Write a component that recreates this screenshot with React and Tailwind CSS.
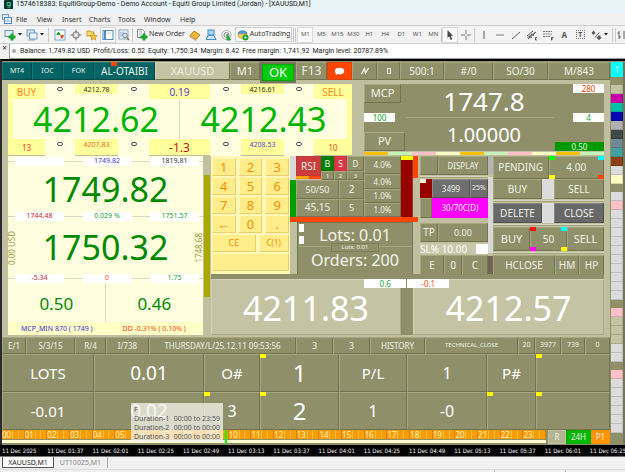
import React from "react";
import { twMerge } from "tailwind-merge";

function Key({ className = "", children, label }) {
  return (
    <button
      type="button"
      aria-label={label}
      className={twMerge(
        "flex min-w-0 items-center justify-center overflow-hidden whitespace-nowrap border border-t-[#a6a780] border-l-[#a6a780] border-r-[#73744f] border-b-[#73744f] bg-[#8f9069] text-[#f0f0e6]",
        className
      )}
    >
      {children}
    </button>
  );
}

function Chip({ className }) {
  return <span className={twMerge("absolute h-1 w-[6px]", className)} />;
}

function Tag({ className, children }) {
  return (
    <span className={twMerge("flex h-[9px] items-center justify-center whitespace-nowrap bg-white text-[8px] leading-none", className)}>
      {children}
    </span>
  );
}

/* ---------- window chrome ---------- */

function TitleBar() {
  return (
    <header className="flex h-[13px] items-start gap-[3px] bg-[#e7f3f7] pl-1 font-['Roboto','Noto_Sans',sans-serif] text-[7px] leading-[9px] text-[#222]">
      <svg viewBox="0 0 9 9" className="h-[9px] w-[9px] shrink-0">
        <rect width="9" height="9" rx="1" fill="#12332f" />
        <path d="M6.4 2.5H3.2v3h3V2.5v4.6H3.4" fill="none" stroke="#27c28b" strokeWidth="1" />
      </svg>
      <span className="whitespace-nowrap">
        1574618383: EquitiGroup-Demo - Demo Account - Equiti Group Limited (Jordan) - [XAUUSD,M1]
      </span>
    </header>
  );
}

function MenuBar() {
  return (
    <nav className="flex h-3 items-center bg-[#f0f0f0] pl-[2px] text-[7px] leading-none text-[#333]">
      <svg viewBox="0 0 10 10" className="mr-1 h-[10px] w-[10px] shrink-0">
        <rect x="0.5" y="0.5" width="6" height="5" fill="#dcebf7" stroke="#6b9cc9" />
        <rect x="2.5" y="3.5" width="7" height="6" fill="#fff" stroke="#4a8ac0" />
        <path d="M4 8V6M6 8V5M8 8V6.5" stroke="#4a8ac0" strokeWidth="0.8" />
      </svg>
      <button type="button" className="w-[21px] text-left">File</button>
      <button type="button" className="w-[25px] text-left">View</button>
      <button type="button" className="w-[27px] text-left">Insert</button>
      <button type="button" className="w-[29px] text-left">Charts</button>
      <button type="button" className="w-[26px] text-left">Tools</button>
      <button type="button" className="w-9 text-left">Window</button>
      <button type="button" className="text-left">Help</button>
    </nav>
  );
}

function Tool({ label, className = "", children }) {
  return (
    <button type="button" aria-label={label} className={twMerge("flex h-4 w-4 shrink-0 items-center justify-center", className)}>
      {children}
    </button>
  );
}

function Icon({ children, className = "" }) {
  return (
    <svg viewBox="0 0 12 12" className={twMerge("h-3 w-3 shrink-0", className)} fill="none" stroke="#5a5a5a" strokeWidth="1">
      {children}
    </svg>
  );
}

function Caret() {
  return (
    <svg viewBox="0 0 4 3" className="h-[3px] w-1 shrink-0">
      <path d="M0 0H4L2 2.5Z" fill="#222" />
    </svg>
  );
}

function Sep({ className = "" }) {
  return <span className={twMerge("h-[14px] w-px shrink-0 bg-[#c8c8c8]", className)} />;
}

const PERIODS = ["M1", "M5", "M15", "M30", "H1", "H4", "D1", "W1", "MN"];

function Toolbar() {
  return (
    <div className="flex h-[19px] items-center overflow-hidden border-y border-[#cfcfcf] bg-[#f3f3f3] pl-1 text-[7px] text-[#333]">
      <Tool label="New chart" className="w-[22px] justify-start gap-[2px]">
        <Icon>
          <rect x="1" y="1.5" width="8" height="6" fill="#e4f0fa" stroke="#6b93b5" />
          <path d="M8 4.5v7M4.5 8h7" stroke="#18a428" strokeWidth="2.8" />
        </Icon>
        <Caret />
      </Tool>
      <Tool label="Profiles" className="w-[22px] justify-start gap-[2px]">
        <Icon>
          <rect x="1" y="1" width="7.5" height="6" fill="#d6e7f6" stroke="#6c9ac4" />
          <rect x="3.5" y="4" width="7.5" height="6" fill="#eef6fc" stroke="#6c9ac4" />
          <path d="M2 11h7" stroke="#7a9cc0" />
        </Icon>
        <Caret />
      </Tool>
      <Sep className="mr-[3px]" />
      <Tool label="Market watch">
        <Icon>
          <rect x="1" y="1" width="10" height="10" fill="#fff" stroke="#79a4cf" />
          <path d="M3 5.5 4.5 3 6 5.5Z" fill="#18a428" stroke="#18a428" />
          <path d="M6.5 6.5H9.5L8 9.5Z" fill="#e2502c" stroke="#e2502c" />
        </Icon>
      </Tool>
      <Tool label="Data window">
        <Icon>
          <circle cx="6" cy="6" r="3.3" stroke="#777" />
          <path d="M6 .5v4M6 7.5v4M.5 6h4M7.5 6h4" stroke="#777" />
        </Icon>
      </Tool>
      <Tool label="Navigator">
        <Icon>
          <path d="M1 2h3l1 1h3v4H1Z" fill="#f5d67a" stroke="#d09c2a" />
          <path d="M7.5 4l1.1 2.4 2.6.3-1.9 1.8.5 2.6-2.3-1.3-2.3 1.3.5-2.6L3.8 6.7l2.6-.3Z" fill="#f7c43c" stroke="#c98f1d" strokeWidth=".7" />
        </Icon>
      </Tool>
      <Tool label="Terminal" className="border border-[#d5d5d5] bg-[#fafafa]">
        <Icon>
          <rect x="1" y="1.5" width="10" height="9" fill="#fff" stroke="#4f8cc4" />
          <path d="M3 2v8" stroke="#4f8cc4" strokeWidth="2" />
          <path d="M5 4h4" stroke="#b8cfe4" />
        </Icon>
      </Tool>
      <Tool label="Strategy tester">
        <Icon>
          <rect x="1" y="1" width="9" height="9" fill="#eef3f8" stroke="#8fa9c2" />
          <path d="M3 3v5M5 2.5v4" stroke="#8fa9c2" />
          <circle cx="7" cy="6.5" r="2.3" fill="#dcebf7" stroke="#71869b" />
          <path d="M8.8 8.5 11 11" stroke="#8b7a45" strokeWidth="1.5" />
        </Icon>
      </Tool>
      <Sep className="mr-[3px]" />
      <button type="button" className="flex shrink-0 items-center gap-px whitespace-nowrap">
        <Icon>
          <path d="M1.5.5h5l2 2v6h-7Z" fill="#fff" stroke="#7d8ea0" />
          <path d="M3 3h3M3 5h3" stroke="#7d8ea0" strokeWidth=".7" />
          <path d="M8 4.5v7M4.5 8h7" stroke="#18a428" strokeWidth="2.8" />
        </Icon>
        New Order
      </button>
      <Tool label="MetaEditor" className="ml-[2px]">
        <Icon>
          <path d="M1 6.5 5 2l6 4-4 4.5Z" fill="#efb83a" stroke="#bc7d1c" />
          <path d="M1 6.5v1.5L7 11.5v-1Z" fill="#fff" stroke="#bc7d1c" strokeWidth=".7" />
        </Icon>
      </Tool>
      <Tool label="Options">
        <Icon>
          <rect x="3" y="1" width="6" height="5" fill="#a8d2f2" stroke="#4c8dc8" />
          <path d="M1 10.5 3 6.5h6l2 4Z" fill="#cfe4f5" stroke="#4c8dc8" />
        </Icon>
      </Tool>
      <Tool label="Signals">
        <Icon>
          <circle cx="5.5" cy="6" r="4.7" stroke="#b5b5b5" />
          <circle cx="5.5" cy="6" r="2.5" stroke="#8a8a8a" />
          <path d="M6 5 9.5 11H6Z" fill="#2aa53a" stroke="#2aa53a" />
        </Icon>
      </Tool>
      <button type="button" className="flex h-[15px] shrink-0 items-center gap-px whitespace-nowrap border border-[#d0d0d0] bg-[#fafafa] px-px">
        <Icon>
          <path d="M1 4.5C2 1 9 1 10 4.5L6 7Z" fill="#4b9fdc" stroke="#2f75b3" />
          <path d="M1 5h9v2.5L5 10 1 7.5Z" fill="#f5cf63" stroke="#c99631" strokeWidth=".7" />
          <circle cx="8.5" cy="8.5" r="3" fill="#19a52b" stroke="none" />
          <path d="M7.7 7v3L10 8.5Z" fill="#fff" stroke="none" />
        </Icon>
        AutoTrading
      </button>
      <Sep className="mx-px" />
      <Sep className="mr-px" />
      <div className="flex w-[144px] shrink-0">
        {PERIODS.map((p, i) => (
          <button
            key={p}
            type="button"
            className={twMerge("h-4 w-4 shrink-0 text-center text-[6px] text-[#555]", i === 0 && "border border-[#d8d8d8] bg-[#fafafa]")}
          >
            {p}
          </button>
        ))}
      </div>
      <Sep />
      <Tool label="Cursor" className="border border-[#d8d8d8] bg-[#fbfbfb]">
        <Icon>
          <path d="M3.5 1v8l1.8-1.7L6.7 11l1.500-.6L6.8 6.8H9Z" fill="#444" stroke="none" />
        </Icon>
      </Tool>
      <Tool label="Crosshair">
        <Icon><path d="M6 1v4M6 7v4M1 6h4M7 6h4" stroke="#777" /></Icon>
      </Tool>
      <Sep />
      <Tool label="Vertical line" className="ml-px">
        <Icon><path d="M6 2v8" /></Icon>
      </Tool>
      <Tool label="Horizontal line">
        <Icon><path d="M2 6h8" stroke="#777" /></Icon>
      </Tool>
      <Tool label="Trendline">
        <Icon><path d="M2 10l8-7" /></Icon>
      </Tool>
      <Tool label="Channel">
        <Icon>
          <path d="M1 7l6-5M2 10l8-7M3 7.5l3 1M5 5l3 1.5M1.5 8.5l8-5" />
          <path d="M11 8.5H9.5v2.5H11" stroke="#333" strokeWidth=".8" />
        </Icon>
      </Tool>
      <Tool label="Fibonacci">
        <Icon>
          <path d="M1 2.5h9M1 5h9M1 7.5h7" strokeDasharray="2 .6" stroke="#777" />
          <path d="M9.5 11.5V8.5h2M9.5 10h1.5" stroke="#333" strokeWidth=".8" />
        </Icon>
      </Tool>
      <Tool label="Text" className="text-[8px] font-bold text-[#555]">A</Tool>
      <Tool label="Text label">
        <span className="flex h-[9px] w-[9px] items-center justify-center border border-dotted border-[#777] text-[7px] font-bold leading-none text-[#555]">T</span>
      </Tool>
      <Tool label="Shapes" className="w-[22px] gap-[2px]">
        <Icon>
          <path d="M3.5 1.5 5.5 4l-2 2-2-2Z" fill="#555" stroke="none" />
          <path d="M5 8.5l4-5M9 6.5l2 2.2-2 2-2-2Z" fill="#555" />
        </Icon>
        <Caret />
      </Tool>
      <Sep className="ml-[2px] mr-[2px]" />
      <Sep />
      <Tool label="Bar chart" className="w-2">
        <Icon><path d="M5 2v8M3.5 4H5M5 8h2M10 2v8" /></Icon>
      </Tool>
    </div>
  );
}

function AccountBar() {
  return (
    <div className="flex h-[15px] bg-[#f0f0f0] text-[7px] text-[#222]">
      <button type="button" aria-label="Close" className="flex w-[9px] shrink-0 justify-center text-[8px] leading-[8px]">×</button>
      <div className="flex flex-1 items-center gap-[4px] whitespace-nowrap border-l border-b border-[#9a9a9a] bg-white pl-[2px] font-['Roboto','Noto_Sans',sans-serif]">
        <span className="h-1 w-1 rounded-full bg-[#aaa]" />
        <span className="flex gap-[3px]">
          <span>Balance: 1,749.82 USD</span>
          <span>Profit/Loss: 0.52</span>
          <span>Equity: 1,750.34</span>
          <span>Margin: 8.42</span>
          <span>Free margin: 1,741.92</span>
          <span>Margin level: 20787.89%</span>
        </span>
      </div>
    </div>
  );
}

/* ---------- trading panel ---------- */

function HeaderRow() {
  const teal = "border-t-[#1b7878] border-l-[#1b7878] border-r-[#004848] border-b-[#004848] bg-[#006464] text-[7px]";
  return (
    <div className="grid h-[18px] grid-cols-[30fr_31fr_31fr_61fr_75fr_30fr_36fr_31fr_25fr_25fr_23fr_44fr_49fr_55fr_62fr]">
      <Key className={teal}>MT4</Key>
      <Key className={teal}>IOC</Key>
      <Key className={teal}>FOK</Key>
      <div className="relative grid">
        <Key className={twMerge(teal, "text-[10px]")}>AL-OTAIBI</Key>
        <Chip className="left-[17px] top-0 bg-[#ff4500]" />
      </div>
      <Key className="border-t-[#d4d3b8] border-l-[#d4d3b8] bg-[#c4c3a4] text-[11px] text-[#efeedd]">XAUUSD</Key>
      <Key className="text-[11px]">M1</Key>
      <div className="relative z-10 -mb-[3px] grid bg-[#74755a] p-[2px]">
        <Key className="border-[#00a800] bg-[#00cc0a] text-[13px] leading-none text-white">OK</Key>
      </div>
      <Key className="text-[12px]">F13</Key>
      <Key label="Messages" className="border-[#e04000] bg-[#ff4500]">
        <svg viewBox="0 0 12 10" className="h-[9px] w-[11px]" fill="#fff">
          <ellipse cx="6" cy="4.5" rx="5.2" ry="3.7" />
          <path d="M2 6v3l3-1.5Z" />
        </svg>
      </Key>
      <Key label="Flash">
        <svg viewBox="0 0 10 8" className="h-2 w-[10px]" fill="none" stroke="#f5f5ea" strokeWidth="1.3">
          <path d="M1.5 7 4.5 1.5 5.5 6 8.5 1" />
        </svg>
      </Key>
      <Key label="Frame"><span className="h-[6px] w-1 border border-[#f5f5ea]" /></Key>
      <Key className="text-[10px]">500:1</Key>
      <Key className="text-[10px]">#/0</Key>
      <Key className="text-[10px]">SO/30</Key>
      <Key className="text-[10px]">M/843</Key>
    </div>
  );
}

function Oval() {
  return <span className="h-1 w-[6px] rounded-[2px] border border-[#555] bg-white" />;
}

function Pale({ className }) {
  return <span className={twMerge("flex justify-center bg-[#ffffe0]", className)}><Oval /></span>;
}

function PriceBlock() {
  const cols = "grid grid-cols-[37fr_30fr_43fr_31fr_61fr_31fr_43fr_30fr_38fr]";
  return (
    <section className="flex h-[71px] flex-col bg-[#ffff9c]">
      <div className={`${cols} h-[15px]`}>
        <span className="flex items-center justify-center text-[10px] leading-none text-[#ff8c1a]">BUY</span>
        <Pale className="pt-[3px]" />
        <span className="bg-[#ffffe0]"><Tag className="h-[10px] bg-[#ffff9c] pt-[2px] text-[7px] text-[#333]">4212.78</Tag></span>
        <Pale className="pt-[3px]" />
        <span className="flex items-center justify-center text-[10px] leading-none text-[#5b3cd6]">0.19</span>
        <Pale className="pt-[3px]" />
        <span className="bg-[#ffffe0]"><Tag className="h-[10px] bg-[#ffff9c] pt-[2px] text-[7px] text-[#333]">4216.61</Tag></span>
        <Pale className="pt-[3px]" />
        <span className="flex items-center justify-center text-[10px] leading-none text-[#ff8c1a]">SELL</span>
      </div>
      <div className="mx-[5px] grid h-10 grid-cols-2 bg-[#ffffe0] text-[34px] leading-10 text-[#00b400]">
        <button type="button" className="border-r border-[#d9d9c8]">4212.62</button>
        <button type="button">4212.43</button>
      </div>
      <div className={`${cols} h-[11px]`}>
        <span className="flex items-center justify-center text-[8px] leading-[18px] text-[#f04a1a]">13</span>
        <Pale className="border-b border-[#d9d9b8] pt-[3px]" />
        <Tag className="mt-[2px] bg-transparent text-[7px] text-[#ff6a1a]">4207.83</Tag>
        <Pale className="border-b border-[#d9d9b8] pt-[3px]" />
        <span className="flex items-center justify-center text-[12px] leading-none text-[#c01818]">-1.3</span>
        <Pale className="border-b border-[#d9d9b8] pt-[3px]" />
        <Tag className="mt-[2px] bg-transparent text-[7px] text-[#5b3cd6]">4208.53</Tag>
        <Pale className="border-b border-[#d9d9b8] pt-[3px]" />
        <span className="flex items-center justify-center text-[8px] leading-[18px] text-[#f04a1a]">10</span>
      </div>
    </section>
  );
}

const STRIP = ["bg-[#ffc000]", "bg-[#c4f2b8]", "bg-[#ffc0c8]", "bg-[#ffffc4]", "bg-[#ffc000]", "bg-[#c4f2b8]", "bg-[#ffc0c8]", "bg-[#ffffc4]", "bg-[#ffc000]", "bg-[#c4f2b8]"];

function McpBlock() {
  return (
    <section>
      <div className="grid h-[67px] grid-cols-[43fr_157fr_40fr] bg-[#8f9069]">
        <div className="flex flex-col justify-between">
          <Key className="h-[19px] w-[37px] text-[11px]">MCP</Key>
          <Tag className="w-[31px] text-[#18a428]">100</Tag>
          <Key className="h-[19px] text-[11px]">PV</Key>
        </div>
        <div className="grid grid-rows-[34px_33px] text-center text-white">
          <span className="border-b border-[#a6a780] pl-2 text-[26px] leading-[34px]">1747.8</span>
          <span className="pl-2 text-[20px] leading-[34px]">1.00000</span>
        </div>
        <div className="flex flex-col items-end justify-between">
          <Tag className="w-[31px] text-[#ff4500]">280</Tag>
          <Tag className="w-[31px] text-[#18a428]">4</Tag>
          <Tag className="w-[49px] bg-[#009a00] text-[#e4ffe4]">0.50</Tag>
        </div>
      </div>
      <div className="mt-px flex h-[3px]">
        {STRIP.map((c, i) => <span key={i} className={`flex-1 ${c}`} />)}
      </div>
    </section>
  );
}

function TagRow({ items }) {
  return (
    <div className="relative flex h-[9px] items-center justify-between pl-[7px] pr-1">
      <span className="absolute inset-x-0 top-1 h-px bg-[#d8d8c4]" />
      {items.map(([text, color], i) => (
        <Tag key={i} className={twMerge("relative w-[49px] text-[7px]", color)}>{text}</Tag>
      ))}
    </div>
  );
}

function BalanceBlock() {
  return (
    <section className="flex flex-col bg-[#ffffe0] pt-px">
      <TagRow items={[["", ""], ["1749.82", "text-[#4a36d8]"], ["1819.81", "text-[#333]"]]} />
      <div className="h-[46px] text-center text-[34px] leading-[46px] text-[#008a00]">1749.82</div>
      <TagRow items={[["1744.48", "text-[#d01c1c]"], ["0.029 %", "text-[#18a428]"], ["1751.57", "text-[#18a428]"]]} />
      <div className="flex h-[53px] items-center justify-between text-[8px] leading-[8px] text-[#9a9a30]">
        <span className="rotate-180 pb-px [writing-mode:vertical-rl]">0.00 USD</span>
        <span className="text-[34px] leading-[53px] text-[#008a00]">1750.32</span>
        <span className="rotate-180 [writing-mode:vertical-rl]">1748.68</span>
      </div>
      <TagRow items={[["-5.34", "text-[#d01c1c]"], ["0", "text-[#f04a1a]"], ["1.75", "text-[#18a428]"]]} />
      <div className="grid flex-1 grid-cols-2 text-center text-[17px] leading-[42px] text-[#008a00]">
        <span className="h-[39px] border-r border-[#d8d8c4]">0.50</span>
        <span className="h-[39px]">0.46</span>
      </div>
      <div className="grid h-[13px] grid-cols-2 items-center bg-[#ffffc6] text-center text-[7px] leading-none">
        <span className="text-[#3a30d0]">MCP_MIN 870 ( 1749 )</span>
        <span className="text-[#ff4a10]">DD -0.31% ( 0.10% )</span>
      </div>
    </section>
  );
}

function Keypad() {
  const k = "h-[18px] border-t-[#fff6b8] border-l-[#fff6b8] border-r-[#e8d070] border-b-[#e8d070] bg-[#ffec8b] text-[13px] leading-none text-[#ff8c00]";
  return (
    <div className="flex flex-col gap-px bg-[#fff8b4] p-px pt-[2px]">
      <div className="grid grid-cols-3 gap-x-[3px] gap-y-px">
        {["1", "2", "3", "4", "5", "6", "7", "8", "9", "←", "0", "."].map((n) => (
          <Key key={n} className={k}>{n}</Key>
        ))}
      </div>
      <div className="grid grid-cols-[43fr_30fr] gap-x-[3px]">
        <Key className={twMerge(k, "text-[9px]")}>CE</Key>
        <Key className={twMerge(k, "text-[8px]")}>C(1)</Key>
      </div>
      <Key label="Clear" className={k} />
    </div>
  );
}

function RsiBlock() {
  return (
    <div className="flex flex-col">
      <div className="grid h-[61px] grid-cols-[6fr_68fr_37fr_12fr_5fr]">
        <div className="flex flex-col">
          <span className="h-6 bg-[#d8d8d8]" />
          <span className="flex-1 bg-[#00a000]" />
        </div>
        <div className="flex flex-col">
          <div className="grid h-6 grid-cols-[25fr_43fr]">
            <div className="flex flex-col">
              <Key className="h-5 border-[#c03838] bg-[#cc3c3c] text-[10px]">RSI</Key>
              <span className="flex h-[3px]"><i className="flex-1 bg-[#ffa500]" /><i className="flex-1 bg-[#ff4500]" /></span>
            </div>
            <div className="grid grid-cols-[13fr_13fr_17fr] grid-rows-[15px_9px]">
              <Key className="border-[#0a7a0a] bg-[#008000] text-[9px]">B</Key>
              <Key className="border-[#d03040] bg-[#dc3545] text-[9px]">S</Key>
              <Key className="text-[8px]">D</Key>
              <Key className="text-[6px] leading-none">1</Key>
              <Key className="text-[6px] leading-none">2</Key>
              <Key className="text-[6px] leading-none">3</Key>
            </div>
          </div>
          <div className="grid flex-1 grid-cols-[43fr_25fr] grid-rows-2 text-[10px]">
            <Key className="text-[9px]">50/50</Key>
            <Key>2</Key>
            <Key>45.15</Key>
            <Key className="text-[9px]">5</Key>
          </div>
        </div>
        <div className="grid grid-rows-[18px_15px_14px_14px] text-[8px] leading-none">
          <Key>4.0%</Key><Key>4.0%</Key><Key>1.0%</Key><Key>1.0%</Key>
        </div>
        <div className="flex flex-col">
          <span className="h-1 bg-[#ffff00]" />
          <span className="flex-1 border-r border-[#a83030] bg-[#980000]" />
        </div>
        <span className="h-[22px] bg-[#ff4500]" />
      </div>
      <span className="h-[5px] bg-[#ff4500]" />
      <div className="grid flex-1 grid-cols-[7fr_116fr_5fr]">
        <span />
        <div className="relative grid grid-rows-[24px_27px] border border-[#73744f] bg-[#8f9069] text-center text-[16px] text-[#f5f5ea]">
          <span className="border-b border-[#a6a780] leading-6">Lots: 0.01</span>
          <span className="leading-[27px]">Orders: 200</span>
          <Chip className="left-px top-px h-[8px] w-[5px] bg-white" />
          <Chip className="left-px top-[13px] h-[8px] w-[5px] bg-white" />
          <span className="absolute left-1/2 top-5 h-[9px] w-12 -translate-x-1/2 border border-[#7b7c58] bg-[#8f9069] text-[6px] leading-[7px]">Lots: 0.01</span>
        </div>
        <span />
      </div>
    </div>
  );
}

function DisplayBlock() {
  const grey = "border-t-[#8a8a8a] border-l-[#8a8a8a] border-r-[#565656] border-b-[#565656] bg-[#6e6e6e]";
  return (
    <div className="flex flex-col pl-[2px]">
      <div className="grid h-[19px] grid-cols-[18fr_50fr]">
        <Key label="Display option" />
        <Key className="text-[8px]">DISPLAY</Key>
      </div>
      <div className="my-[1px] h-[2px] border-b border-[#a3a37e] bg-[#d6d5bc]" />
      <div className="grid h-[19px] grid-cols-[12fr_38fr_18fr]">
        <span className="relative bg-[#980000]"><Chip className="left-0 top-0 bg-[#fff8e0]" /></span>
        <Key className={twMerge(grey, "text-[8px]")}>3499</Key>
        <Key className={twMerge(grey, "text-[7px]")}>25%</Key>
      </div>
      <div className="grid h-5 grid-cols-[12fr_56fr]">
        <Key label="Ratio option" />
        <Key className="border-[#ff00ff] bg-[#ff00ff] text-[8px]">30/70C(D)</Key>
      </div>
      <div className="mt-[5px] grid h-[19px] grid-cols-[18fr_50fr]">
        <Key className="text-[10px]">TP</Key>
        <Key className="text-[9px]">0.00</Key>
      </div>
      <div className="my-px flex h-[11px] items-center justify-between bg-[#c8c7aa] text-[10px] leading-none text-white">
        <span className="whitespace-nowrap">SL% 10.00</span>
        <span className="h-[10px] w-3 bg-white" />
      </div>
      <div className="grid flex-1 grid-cols-[24fr_18fr_26fr] text-[10px]">
        <Key>E</Key><Key>0</Key><Key>C</Key>
      </div>
    </div>
  );
}

function OrderBlock() {
  const grey = "border-t-[#848484] border-l-[#848484] border-r-[#505050] border-b-[#505050] bg-[#686868]";
  return (
    <div className="flex flex-col text-[10px]">
      <div className="relative grid h-[23px] grid-cols-2">
        <Key>PENDING</Key>
        <Key>4.00</Key>
        <Chip className="left-1/2 top-0 bg-[#00ff00]" />
        <Chip className="right-0 top-0 bg-[#00ffff]" />
        <Chip className="bottom-0 left-1/2 bg-[#ffff00]" />
        <Chip className="bottom-0 right-0 bg-[#ff4500]" />
      </div>
      <div className="grid h-5 grid-cols-[49fr_12fr_50fr]">
        <Key>BUY</Key><span className="bg-[#dcdcdc]" /><Key>SELL</Key>
      </div>
      <div className="my-px h-[2px] border-b border-[#a3a37e] bg-[#d6d5bc]" />
      <div className="grid h-5 grid-cols-[49fr_12fr_50fr]">
        <Key className={grey}>DELETE</Key><span className="bg-[#dcdcdc]" /><Key className={grey}>CLOSE</Key>
      </div>
      <div className="my-px h-[2px] border-b border-[#a3a37e] bg-[#d6d5bc]" />
      <div className="grid h-6 grid-cols-[37fr_37fr_37fr]">
        <Key className="text-[11px]">BUY</Key>
        <div className="relative grid">
          <Key>50</Key>
          <Chip className="left-0 top-0 bg-[#ff1010]" />
          <Chip className="right-0 top-0 bg-[#00ffff]" />
          <Chip className="bottom-0 left-0 bg-[#ff00ff]" />
          <Chip className="bottom-0 right-0 bg-[#ffff00]" />
        </div>
        <Key className="text-[11px]">SELL</Key>
      </div>
      <div className="my-px h-[2px] border-b border-[#a3a37e] bg-[#d6d5bc]" />
      <div className="grid flex-1 grid-cols-[62fr_24fr_25fr]">
        <Key>HCLOSE</Key><Key>HM</Key><Key>HP</Key>
      </div>
    </div>
  );
}

function QuoteRow() {
  return (
    <div className="relative mt-px grid h-[61px] grid-cols-[190fr_12fr_191fr] border-t-[5px] border-[#8f9069] text-[34px] leading-none text-white">
      <Key className="border-t-[#d4d3b8] border-l-[#d4d3b8] border-r-[#aaa988] border-b-[#aaa988] bg-[#c4c3a4] pt-px text-white">4211.83</Key>
      <span className="bg-[#8f9069]" />
      <Key className="border-t-[#d4d3b8] border-l-[#d4d3b8] border-r-[#aaa988] border-b-[#aaa988] bg-[#c4c3a4] pt-px text-white">4212.57</Key>
      <div className="absolute left-[39%] top-0 flex gap-px">
        <Tag className="w-[42px] text-[#18a428]">0.6</Tag>
        <Tag className="w-[42px] text-[#ff4a20]">-0.1</Tag>
      </div>
    </div>
  );
}

function InfoRow() {
  return (
    <div className="grid h-[17px] grid-cols-[24fr_49fr_31fr_43fr_147fr_37fr_37fr_55fr_93fr_17fr_26fr_24fr_25fr] text-[8px]">
      <Key>E/1</Key><Key>S/3/15</Key><Key>R/4</Key><Key>I/738</Key>
      <Key>THURSDAY/L/25.12.11 09:53:56</Key>
      <Key className="text-[9px]">3</Key><Key className="text-[9px]">3</Key><Key>HISTORY</Key>
      <Key className="text-[6px]">TECHNICAL_CLOSE</Key>
      <Key className="text-[7px]">20</Key><Key className="text-[7px]">3977</Key><Key className="text-[7px]">739</Key><Key className="text-[7px]">0</Key>
    </div>
  );
}

const CELLS = [
  ["LOTS", "text-[15px]"], ["0.01", "text-[19px]"], ["O#", "text-[15px]"], ["1", "text-[24px]", true],
  ["P/L", "text-[15px]"], ["1", "text-[16px]"], ["P#", "text-[15px]"], ["", "", true],
  ["-0.01", "text-[15px]"], ["0.02", "text-[19px]"], ["3", "text-[16px]", true], ["2", "text-[24px]", true],
  ["1", "text-[16px]"], ["-0", "text-[16px]"], ["", "", true], ["", "", true],
];

function LotsGrid() {
  return (
    <div className="grid grid-cols-[92fr_110fr_56fr_79fr_68fr_80fr_49fr_74fr] grid-rows-[38px_38px]">
      {CELLS.map(([text, size, chip], i) => (
        <div key={i} className="relative grid">
          <Key label={text ? undefined : "Empty slot"} className={twMerge("text-white", size)}>{text}</Key>
          {chip && <Chip className="left-0 top-0 bg-[#ffff00]" />}
        </div>
      ))}
    </div>
  );
}

function HoursRow() {
  const hours = Array.from({ length: 24 }, (_, i) => String(i).padStart(2, "0"));
  return (
    <div className="flex h-[15px] gap-[2px] pb-px">
      <div className="relative flex flex-1 flex-col">
        <div className="flex h-[9px] bg-[#ff9d00] text-[8px] leading-[9px] text-[#fff3d0]">
          {hours.map((h) => (
            <span key={h} className="grid flex-1 grid-cols-[11fr_6fr_6fr]">
              <span className="border-r border-[#ffbe50]">{h}</span>
              <span className="border-r border-[#ffbe50]" />
              <span className="border-r border-[#d88000]" />
            </span>
          ))}
        </div>
        <span className="mt-px h-[3px] bg-[#fffbd0]" />
        <span className="absolute left-[41%] top-0 h-[14px] w-[2px] bg-[#00ff00]" />
      </div>
      <div className="grid w-[62px] grid-cols-[18fr_25fr_19fr] text-[8px]">
        <Key className="border-[#c4c3a4] bg-[#b4b393]">R</Key>
        <Key className="border-[#00a800] bg-[#00b800]">24H</Key>
        <Key className="border-[#ff9000] bg-[#ff9500]">P1</Key>
      </div>
    </div>
  );
}

function Tooltip() {
  return (
    <div role="tooltip" className="absolute bottom-[3px] left-[129px] w-[92px] bg-[#f4f4ee]/75 px-[3px] pb-px pt-[2px] text-[7px] leading-[9px] text-[#555]">
      <div>F</div>
      {["00:00 to 23:59", "00:00 to 00:00", "00:00 to 00:00"].map((range, i) => (
        <div key={i} className="flex justify-between whitespace-nowrap">
          <span>Duration-{i + 1}</span>
          <span>{range}</span>
        </div>
      ))}
    </div>
  );
}

const SWATCHES = [
  ["#c4c3a4", "#c800a8", "#00c0a8", "#0808b0", "#b0b0b0", "#404848", "#708898", "#40a0a0", "#8c4018", "#dcdcdc", "#ffffc4"],
  ["#dcdcdc", "#ffc0c8", ...Array(10).fill("#dcdcdc")],
  ["#ffc0c8", "#c4c3a4", "#c4c3a4", "#c4c3a4", "#dcdcdc", "#dcdcdc"],
  ["#ffc0c8", ...Array(6).fill("#dcdcdc")],
];

function SideColumn() {
  return (
    <div className="flex w-[15px] shrink-0 flex-col gap-2 border-r-2 border-[#74755a] bg-[#8f9069] pl-px">
      <button type="button" className="h-[15px] w-3 bg-[#00ffff] text-[8px] leading-none text-white">1</button>
      {SWATCHES.map((group, g) => (
        <div key={g} className="flex flex-col">
          {group.map((color, i) => (
            <button
              key={i}
              type="button"
              aria-label={`Colour ${g + 1}-${i + 1}`}
              className="h-[9px] w-3 border-b border-r border-[#00000022]"
              style={{ backgroundColor: color }}
            />
          ))}
        </div>
      ))}
    </div>
  );
}

const TIMES = ["2025", "01:37", "02:01", "02:25", "02:49", "03:13", "03:37", "04:01", "04:25", "04:49", "05:13", "05:37", "06:01", "06:25"];

function TimeAxis() {
  return (
    <div className="flex h-[12px] overflow-hidden border-b border-[#777] bg-black pl-[2px] font-['DejaVu_Sans_Condensed','DejaVu_Sans',sans-serif] text-[6px] leading-[11px] text-[#f4f4f4]">
      {TIMES.map((t) => (
        <span key={t} className="w-[7.26%] shrink-0 whitespace-nowrap">11 Dec {t}</span>
      ))}
    </div>
  );
}

function ChartTabs() {
  return (
    <footer>
      <div className="flex h-[12px] items-start pl-[2px] text-[7px]">
        <button type="button" className="h-[11px] w-[52px] border border-t-0 border-[#555] bg-white leading-none text-[#222]">XAUUSD,M1</button>
        <button type="button" className="h-[11px] w-[54px] border-r border-[#aaa] leading-none text-[#888]">UT100Z5,M1</button>
      </div>
      <div className="flex h-[3px] justify-end border-t border-[#dcdcdc] pr-[59px]">
        <span className="w-[72px] border-x border-[#bbb]" />
      </div>
    </footer>
  );
}

export default function App() {
  return (
    <div className="min-h-screen w-full overflow-hidden bg-[#f0f0f0] font-['Noto_Sans','Open_Sans',sans-serif]">
      <TitleBar />
      <MenuBar />
      <Toolbar />
      <AccountBar />
      <main className="flex border-t-2 border-l-2 border-t-black border-l-[#2a2a32] bg-[#8f9069] pt-px">
        <div className="relative min-w-0 flex-1">
          <HeaderRow />
          <div className="bg-[#c0bf9f] px-[6px] pb-[2px] pt-1">
            <div className="grid grid-cols-[344fr_12fr_240fr]">
              <PriceBlock />
              <span />
              <McpBlock />
            </div>
            <div className="mt-px grid grid-cols-[195fr_8fr_393fr]">
              <BalanceBlock />
              <span className="mb-[38px] ml-px mr-px mt-[19px] bg-[#a8a800]" />
              <div>
                <div className="grid h-[117px] grid-cols-[79fr_128fr_70fr_5fr_111fr]">
                  <Keypad />
                  <RsiBlock />
                  <DisplayBlock />
                  <div className="flex flex-col justify-between">
                    <span className="h-[18px] bg-[#b4b4b4]" />
                    <span className="h-[76px] bg-[#d8d8d4]" />
                    <span className="h-[19px] bg-[#6e6452]" />
                  </div>
                  <OrderBlock />
                </div>
                <QuoteRow />
              </div>
            </div>
          </div>
          <InfoRow />
          <LotsGrid />
          <HoursRow />
          <Tooltip />
        </div>
        <SideColumn />
      </main>
      <TimeAxis />
      <ChartTabs />
    </div>
  );
}
